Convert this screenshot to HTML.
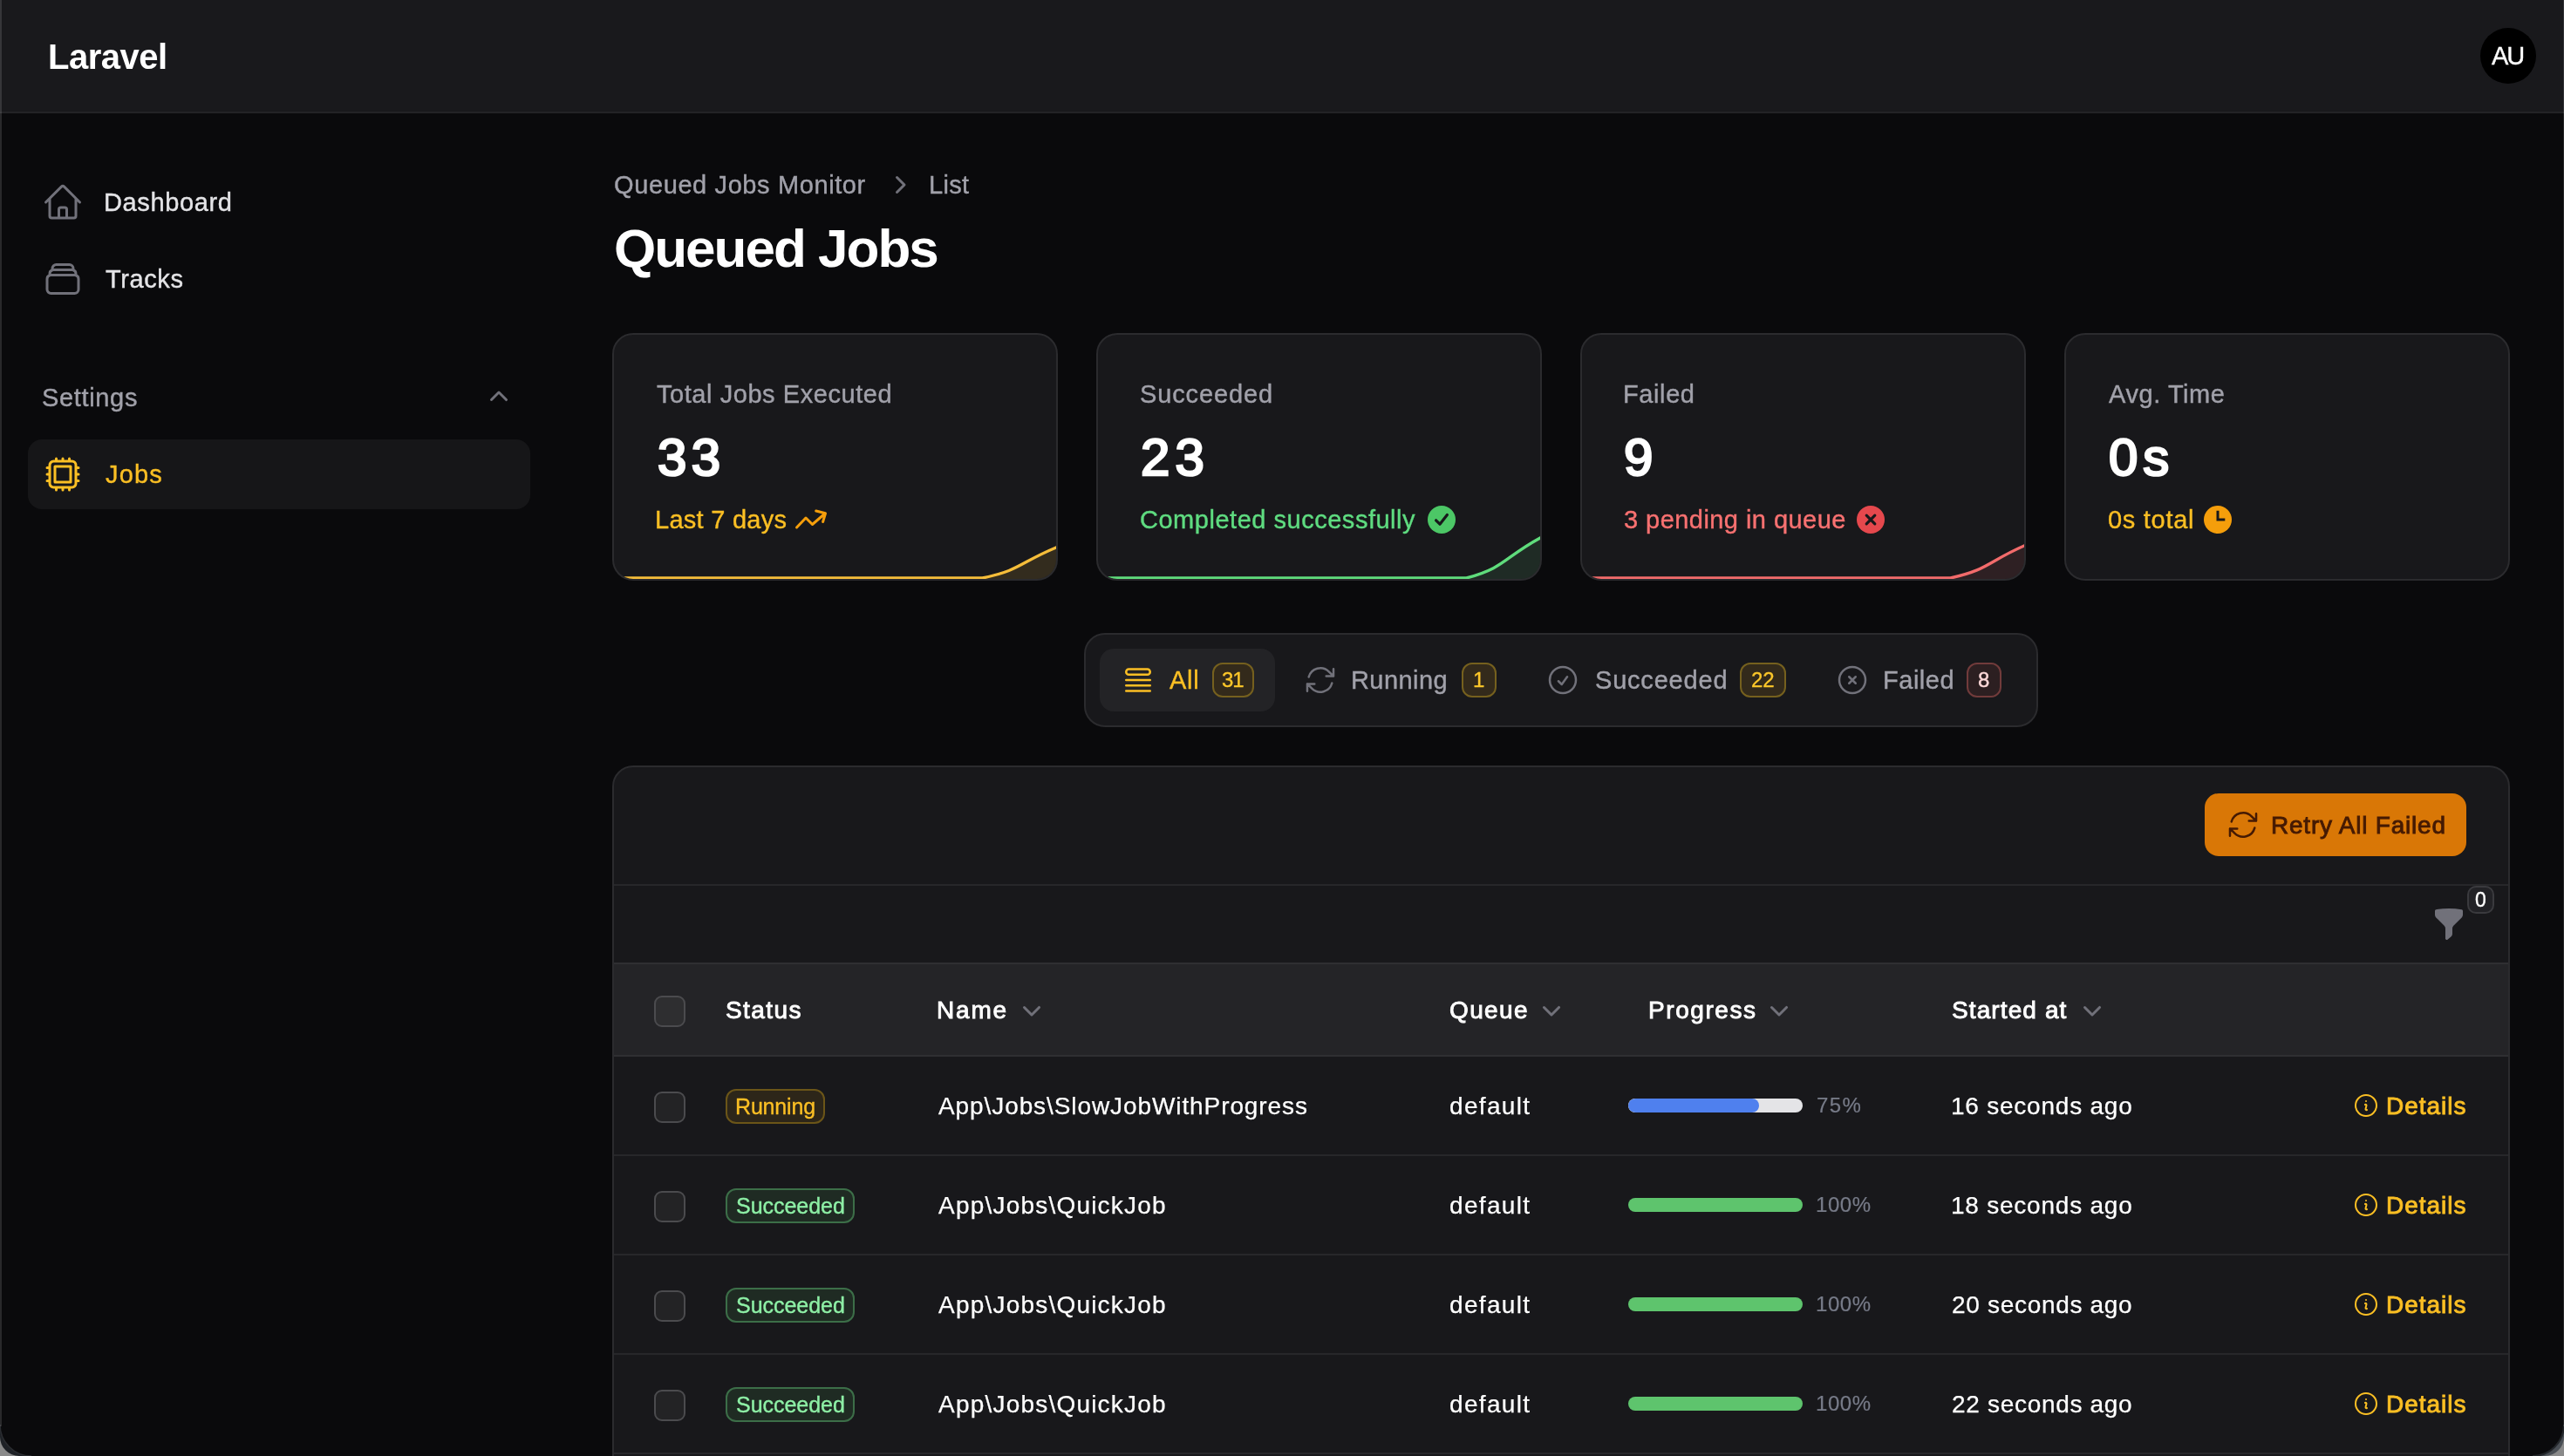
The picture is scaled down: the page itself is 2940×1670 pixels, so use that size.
<!DOCTYPE html>
<html><head><meta charset="utf-8"><title>Queued Jobs</title>
<style>
html,body{margin:0;padding:0;width:2940px;height:1670px;overflow:hidden;background:#0a0a0c;}
body{position:relative;font-family:"Liberation Sans",sans-serif;}
.t{position:absolute;white-space:nowrap;will-change:transform;}
</style></head><body>
<div style="position:absolute;left:0px;top:0px;width:2940px;height:128px;background:#19191c"></div><div style="position:absolute;left:0px;top:128px;width:2940px;height:2px;background:#232326"></div><div class="t" style="left:55.0px;top:44.6px;font-size:40px;line-height:40px;color:#ffffff;font-weight:700;letter-spacing:-0.50px;">Laravel</div><div style="position:absolute;left:2844px;top:32px;width:64px;height:64px;background:#000;border-radius:50%"></div><div class="t" style="left:2857.0px;top:49.8px;font-size:29px;line-height:29px;color:#ffffff;font-weight:400;letter-spacing:-2.00px;-webkit-text-stroke:0.35px">AU</div><svg style="position:absolute;left:48px;top:208px;" width="48" height="48" viewBox="0 0 24 24" fill="none"><path stroke="#71717a" stroke-width="1.5" stroke-linecap="round" stroke-linejoin="round" d="m2.25 12 8.954-8.955c.44-.439 1.152-.439 1.591 0L21.75 12M4.5 9.75v10.125c0 .621.504 1.125 1.125 1.125H9.75v-4.875c0-.621.504-1.125 1.125-1.125h2.25c.621 0 1.125.504 1.125 1.125V21h4.125c.621 0 1.125-.504 1.125-1.125V9.75M8.25 21h8.25"/></svg><div class="t" style="left:119.0px;top:217.8px;font-size:29px;line-height:29px;color:#e4e4e7;font-weight:400;letter-spacing:0.62px;-webkit-text-stroke:0.4px">Dashboard</div><svg style="position:absolute;left:48px;top:296px;" width="48" height="48" viewBox="0 0 24 24" fill="none"><path stroke="#71717a" stroke-width="1.5" stroke-linecap="round" stroke-linejoin="round" d="M6 6.878V6a2.25 2.25 0 0 1 2.25-2.25h7.5A2.25 2.25 0 0 1 18 6v.878m-12 0c.235-.083.487-.128.75-.128h10.5c.263 0 .515.045.75.128m-12 0A2.25 2.25 0 0 0 4.5 9v.878m13.5-3A2.25 2.25 0 0 1 19.5 9v.878m0 0a2.251 2.251 0 0 0-.75-.128H5.25c-.263 0-.515.045-.75.128m15 0A2.25 2.25 0 0 1 21 12v6a2.25 2.25 0 0 1-2.25 2.25H5.25A2.25 2.25 0 0 1 3 18v-6c0-.98.626-1.813 1.5-2.122"/></svg><div class="t" style="left:121.0px;top:305.8px;font-size:29px;line-height:29px;color:#e4e4e7;font-weight:400;letter-spacing:0.60px;-webkit-text-stroke:0.4px">Tracks</div><div class="t" style="left:48.0px;top:441.8px;font-size:29px;line-height:29px;color:#a1a1aa;font-weight:400;letter-spacing:0.66px;-webkit-text-stroke:0.4px">Settings</div><svg style="position:absolute;left:552px;top:436px;" width="40" height="40" viewBox="0 0 20 20" fill="none"><path fill="#71717a" d="M9.47 6.47a.75.75 0 0 1 1.06 0l4.25 4.25a.75.75 0 1 1-1.06 1.06L10 8.06l-3.72 3.72a.75.75 0 0 1-1.06-1.06l4.25-4.25Z"/></svg><div style="position:absolute;left:32px;top:504px;width:576px;height:80px;background:#161618;border-radius:16px"></div><svg style="position:absolute;left:48px;top:520px;" width="48" height="48" viewBox="0 0 24 24" fill="none"><path stroke="#fbbf24" stroke-width="1.5" stroke-linecap="round" stroke-linejoin="round" d="M8.25 3v1.5M4.5 8.25H3m18 0h-1.5M4.5 12H3m18 0h-1.5m-15 3.75H3m18 0h-1.5M8.25 19.5V21M12 3v1.5m0 15V21m3.75-18v1.5m0 15V21m-9-1.5h10.5a2.25 2.25 0 0 0 2.25-2.25V6.75a2.25 2.25 0 0 0-2.25-2.25H6.75A2.25 2.25 0 0 0 4.5 6.75v10.5a2.25 2.25 0 0 0 2.25 2.25Zm.75-12h9v9h-9v-9Z"/></svg><div class="t" style="left:121.0px;top:529.8px;font-size:29px;line-height:29px;color:#fbbf24;font-weight:400;letter-spacing:1.17px;-webkit-text-stroke:0.4px">Jobs</div><div class="t" style="left:704.0px;top:197.8px;font-size:29px;line-height:29px;color:#a1a1aa;font-weight:400;letter-spacing:0.61px;-webkit-text-stroke:0.4px">Queued Jobs Monitor</div><svg style="position:absolute;left:1011px;top:192px;" width="40" height="40" viewBox="0 0 20 20" fill="none"><path fill="#71717a" d="M8.22 5.22a.75.75 0 0 1 1.06 0l4.25 4.25a.75.75 0 0 1 0 1.06l-4.25 4.25a.75.75 0 0 1-1.06-1.06L11.94 10 8.22 6.28a.75.75 0 0 1 0-1.06Z"/></svg><div class="t" style="left:1065.0px;top:197.8px;font-size:29px;line-height:29px;color:#a1a1aa;font-weight:400;letter-spacing:0.33px;-webkit-text-stroke:0.4px">List</div><div class="t" style="left:704.0px;top:254.2px;font-size:62px;line-height:62px;color:#ffffff;font-weight:700;letter-spacing:-2.00px;">Queued Jobs</div><div style="position:absolute;left:702px;top:382px;width:511px;height:284px;box-sizing:border-box;background:#18181b;border:2px solid #2b2b2e;border-radius:24px;overflow:hidden"><svg style="position:absolute;left:0;top:0" width="507" height="280" viewBox="0 0 507 280"><path d="M-4,279 L422.5,279 C466.4,269.9 464.8,261.5 507,244 L511,242 L509,290 L-4,290 Z" fill="rgba(245,189,58,0.12)"/><path d="M-4,279 L422.5,279 C466.4,269.9 464.8,261.5 507,244 L511,242" stroke="#f5bd3a" stroke-width="3.4" fill="none"/></svg></div><div class="t" style="left:753.0px;top:437.8px;font-size:29px;line-height:29px;color:#a1a1aa;font-weight:400;letter-spacing:0.56px;-webkit-text-stroke:0.4px">Total Jobs Executed</div><div class="t" style="left:754.3px;top:495.4px;font-size:60px;line-height:60px;color:#ffffff;font-weight:400;letter-spacing:5.50px;-webkit-text-stroke:2.6px">33</div><div class="t" style="left:751.0px;top:581.8px;font-size:29px;line-height:29px;color:#fbbf24;font-weight:400;letter-spacing:0.27px;-webkit-text-stroke:0.4px">Last 7 days</div><div style="position:absolute;left:1257px;top:382px;width:511px;height:284px;box-sizing:border-box;background:#18181b;border:2px solid #2b2b2e;border-radius:24px;overflow:hidden"><svg style="position:absolute;left:0;top:0" width="507" height="280" viewBox="0 0 507 280"><path d="M-4,279 L422.5,279 C467.5,266.8 464.8,256.0 507,233 L511,231 L509,290 L-4,290 Z" fill="rgba(95,220,124,0.10)"/><path d="M-4,279 L422.5,279 C467.5,266.8 464.8,256.0 507,233 L511,231" stroke="#5fdc7c" stroke-width="3.4" fill="none"/></svg></div><div class="t" style="left:1307.0px;top:437.8px;font-size:29px;line-height:29px;color:#a1a1aa;font-weight:400;letter-spacing:0.88px;-webkit-text-stroke:0.4px">Succeeded</div><div class="t" style="left:1308.3px;top:495.4px;font-size:60px;line-height:60px;color:#ffffff;font-weight:400;letter-spacing:6.20px;-webkit-text-stroke:2.6px">23</div><div class="t" style="left:1307.0px;top:581.8px;font-size:29px;line-height:29px;color:#5fdc80;font-weight:400;letter-spacing:0.52px;-webkit-text-stroke:0.4px">Completed successfully</div><div style="position:absolute;left:1812px;top:382px;width:511px;height:284px;box-sizing:border-box;background:#18181b;border:2px solid #2b2b2e;border-radius:24px;overflow:hidden"><svg style="position:absolute;left:0;top:0" width="507" height="280" viewBox="0 0 507 280"><path d="M-4,279 L422.5,279 C466.6,269.3 464.8,260.5 507,242 L511,240 L509,290 L-4,290 Z" fill="rgba(242,107,107,0.10)"/><path d="M-4,279 L422.5,279 C466.6,269.3 464.8,260.5 507,242 L511,240" stroke="#f26b6b" stroke-width="3.4" fill="none"/></svg></div><div class="t" style="left:1861.0px;top:437.8px;font-size:29px;line-height:29px;color:#a1a1aa;font-weight:400;letter-spacing:0.60px;-webkit-text-stroke:0.4px">Failed</div><div class="t" style="left:1862.3px;top:495.4px;font-size:60px;line-height:60px;color:#ffffff;font-weight:400;letter-spacing:0.00px;-webkit-text-stroke:2.6px">9</div><div class="t" style="left:1862.0px;top:581.8px;font-size:29px;line-height:29px;color:#f87171;font-weight:400;letter-spacing:0.45px;-webkit-text-stroke:0.4px">3 pending in queue</div><div style="position:absolute;left:2367px;top:382px;width:511px;height:284px;box-sizing:border-box;background:#18181b;border:2px solid #2b2b2e;border-radius:24px;overflow:hidden"></div><div class="t" style="left:2418.0px;top:437.8px;font-size:29px;line-height:29px;color:#a1a1aa;font-weight:400;letter-spacing:0.57px;-webkit-text-stroke:0.4px">Avg. Time</div><div class="t" style="left:2418.3px;top:495.4px;font-size:60px;line-height:60px;color:#ffffff;font-weight:400;letter-spacing:6.00px;-webkit-text-stroke:2.6px">0s</div><div class="t" style="left:2417.0px;top:581.8px;font-size:29px;line-height:29px;color:#fbbf24;font-weight:400;letter-spacing:0.71px;-webkit-text-stroke:0.4px">0s total</div><svg style="position:absolute;left:900px;top:576px;" width="60" height="40" viewBox="0 0 60 40" fill="none"><path stroke="#f59e0b" stroke-width="3" stroke-linecap="round" stroke-linejoin="round" d="M13.5 29 24 18l7.5 7.5L46 13M35.7 10l10.8 2.7L43.6 22.5"/></svg><svg style="position:absolute;left:1633px;top:576px;" width="40" height="40" viewBox="0 0 20 20" fill="none"><circle cx="10" cy="10" r="8" fill="#4cc766"/><path d="M6.8 10.4 9 12.6 13.2 7.2" stroke="#18181b" stroke-width="1.6" stroke-linecap="round" stroke-linejoin="round"/></svg><svg style="position:absolute;left:2125px;top:576px;" width="40" height="40" viewBox="0 0 20 20" fill="none"><circle cx="10" cy="10" r="8" fill="#e5484d"/><path d="M7.6 7.6l4.8 4.8M12.4 7.6l-4.8 4.8" stroke="#18181b" stroke-width="1.6" stroke-linecap="round"/></svg><svg style="position:absolute;left:2523px;top:576px;" width="40" height="40" viewBox="0 0 20 20" fill="none"><circle cx="10" cy="10" r="8" fill="#f59e0b"/><path d="M10 5.6V10h3.4" stroke="#18181b" stroke-width="1.5" stroke-linecap="square" stroke-linejoin="miter"/></svg><div style="position:absolute;left:1243px;top:726px;width:1094px;height:108px;box-sizing:border-box;background:#18181b;border:2px solid #2b2b2e;border-radius:24px"></div><div style="position:absolute;left:1261px;top:744px;width:201px;height:72px;background:#232326;border-radius:16px"></div><svg style="position:absolute;left:1285px;top:760px;" width="40" height="40" viewBox="0 0 24 24" fill="none"><path stroke="#fbbf24" stroke-width="1.5" stroke-linecap="round" stroke-linejoin="round" d="M3.75 12h16.5m-16.5 3.75h16.5M3.75 19.5h16.5M5.625 4.5h12.75a1.875 1.875 0 0 1 0 3.75H5.625a1.875 1.875 0 0 1 0-3.75Z"/></svg><div class="t" style="left:1341.0px;top:765.8px;font-size:29px;line-height:29px;color:#fbbf24;font-weight:400;letter-spacing:0.70px;-webkit-text-stroke:0.4px">All</div><div style="position:absolute;left:1390px;top:760px;width:48px;height:40px;box-sizing:border-box;background:#332a1b;border:2px solid #75601e;border-radius:12px"></div><div class="t" style="left:1401.1px;top:768.0px;font-size:24px;line-height:24px;color:#fcc72a;font-weight:400;letter-spacing:-1.20px;-webkit-text-stroke:0.35px">31</div><svg style="position:absolute;left:1494px;top:760px;" width="40" height="40" viewBox="0 0 24 24" fill="none"><path stroke="#71717a" stroke-width="1.5" stroke-linecap="round" stroke-linejoin="round" d="M16.023 9.348h4.992v-.001M2.985 19.644v-4.992m0 0h4.992m-4.993 0 3.181 3.183a8.25 8.25 0 0 0 13.803-3.7M4.031 9.865a8.25 8.25 0 0 1 13.803-3.7l3.181 3.182m0-4.991v4.99"/></svg><div class="t" style="left:1549.0px;top:765.8px;font-size:29px;line-height:29px;color:#a1a1aa;font-weight:400;letter-spacing:0.43px;-webkit-text-stroke:0.4px">Running</div><div style="position:absolute;left:1676px;top:760px;width:40px;height:40px;box-sizing:border-box;background:#332a1b;border:2px solid #75601e;border-radius:12px"></div><div class="t" style="left:1689.0px;top:768.0px;font-size:24px;line-height:24px;color:#fcc72a;font-weight:400;letter-spacing:0.00px;-webkit-text-stroke:0.35px">1</div><svg style="position:absolute;left:1772px;top:760px;" width="40" height="40" viewBox="0 0 24 24" fill="none"><path stroke="#71717a" stroke-width="1.5" stroke-linecap="round" stroke-linejoin="round" d="M9 12.75 11.25 15 15 9.75M21 12a9 9 0 1 1-18 0 9 9 0 0 1 18 0Z"/></svg><div class="t" style="left:1828.6px;top:765.8px;font-size:29px;line-height:29px;color:#a1a1aa;font-weight:400;letter-spacing:0.80px;-webkit-text-stroke:0.4px">Succeeded</div><div style="position:absolute;left:1995px;top:760px;width:53px;height:40px;box-sizing:border-box;background:#332a1b;border:2px solid #75601e;border-radius:12px"></div><div class="t" style="left:2008.0px;top:768.0px;font-size:24px;line-height:24px;color:#fcc72a;font-weight:400;letter-spacing:0.00px;-webkit-text-stroke:0.35px">22</div><svg style="position:absolute;left:2104px;top:760px;" width="40" height="40" viewBox="0 0 24 24" fill="none"><path stroke="#71717a" stroke-width="1.5" stroke-linecap="round" stroke-linejoin="round" d="m9.75 9.75 4.5 4.5m0-4.5-4.5 4.5M21 12a9 9 0 1 1-18 0 9 9 0 0 1 18 0Z"/></svg><div class="t" style="left:2159.0px;top:765.8px;font-size:29px;line-height:29px;color:#a1a1aa;font-weight:400;letter-spacing:0.52px;-webkit-text-stroke:0.4px">Failed</div><div style="position:absolute;left:2255px;top:760px;width:40px;height:40px;box-sizing:border-box;background:#2c1f21;border:2px solid #713b3b;border-radius:12px"></div><div class="t" style="left:2268.0px;top:768.0px;font-size:24px;line-height:24px;color:#fdd9d9;font-weight:400;letter-spacing:0.00px;-webkit-text-stroke:0.35px">8</div><div style="position:absolute;left:702px;top:878px;width:2176px;height:900px;box-sizing:border-box;background:#18181b;border:2px solid #2b2b2e;border-radius:24px;overflow:hidden"></div><div style="position:absolute;left:704px;top:1014px;width:2172px;height:2px;background:#27272a"></div><div style="position:absolute;left:2528px;top:910px;width:300px;height:72px;background:#d97706;border-radius:16px"></div><svg style="position:absolute;left:2552px;top:926px;" width="40" height="40" viewBox="0 0 24 24" fill="none"><path stroke="#451a03" stroke-width="1.5" stroke-linecap="round" stroke-linejoin="round" d="M16.023 9.348h4.992v-.001M2.985 19.644v-4.992m0 0h4.992m-4.993 0 3.181 3.183a8.25 8.25 0 0 0 13.803-3.7M4.031 9.865a8.25 8.25 0 0 1 13.803-3.7l3.181 3.182m0-4.991v4.99"/></svg><div class="t" style="left:2604.0px;top:932.6px;font-size:28px;line-height:28px;color:#451a03;font-weight:400;letter-spacing:0.78px;-webkit-text-stroke:0.9px">Retry All Failed</div><svg style="position:absolute;left:2788px;top:1040px;" width="40" height="40" viewBox="0 0 20 20" fill="none"><path fill="#71717a" d="M2.628 1.601C5.028 1.206 7.49 1 10 1s4.973.206 7.372.601a.75.75 0 0 1 .628.74v2.288a2.25 2.25 0 0 1-.659 1.59l-4.682 4.683a2.25 2.25 0 0 0-.659 1.59v3.037c0 .684-.31 1.33-.844 1.757l-1.937 1.55A.75.75 0 0 1 8 18.25v-5.757a2.25 2.25 0 0 0-.659-1.591L2.659 6.22A2.25 2.25 0 0 1 2 4.629V2.34a.75.75 0 0 1 .628-.74Z"/></svg><div style="position:absolute;left:2829px;top:1016px;width:31px;height:32px;box-sizing:border-box;background:#222226;border:2px solid #3a3a3e;border-radius:10px"></div><div class="t" style="left:2838.0px;top:1020.8px;font-size:23px;line-height:23px;color:#ffffff;font-weight:400;letter-spacing:0.00px;-webkit-text-stroke:0.35px">0</div><div style="position:absolute;left:704px;top:1104px;width:2172px;height:2px;background:#2f2f32"></div><div style="position:absolute;left:704px;top:1106px;width:2172px;height:104px;background:#242427"></div><div style="position:absolute;left:704px;top:1210px;width:2172px;height:2px;background:#2f2f32"></div><div style="position:absolute;left:750px;top:1142px;width:36px;height:36px;box-sizing:border-box;background:#2e2e30;border:2px solid #4b4b4e;border-radius:9px"></div><div class="t" style="left:831.8px;top:1144.6px;font-size:28px;line-height:28px;color:#ffffff;font-weight:400;letter-spacing:1.40px;-webkit-text-stroke:0.9px">Status</div><div class="t" style="left:1074.0px;top:1144.6px;font-size:28px;line-height:28px;color:#ffffff;font-weight:400;letter-spacing:1.83px;-webkit-text-stroke:0.9px">Name</div><svg style="position:absolute;left:1163px;top:1138px;" width="40" height="40" viewBox="0 0 20 20" fill="none"><path fill="#71717a" d="M5.22 8.22a.75.75 0 0 1 1.06 0L10 11.94l3.72-3.72a.75.75 0 1 1 1.06 1.06l-4.25 4.25a.75.75 0 0 1-1.06 0L5.22 9.28a.75.75 0 0 1 0-1.06Z"/></svg><div class="t" style="left:1661.5px;top:1144.6px;font-size:28px;line-height:28px;color:#ffffff;font-weight:400;letter-spacing:1.38px;-webkit-text-stroke:0.9px">Queue</div><svg style="position:absolute;left:1759px;top:1138px;" width="40" height="40" viewBox="0 0 20 20" fill="none"><path fill="#71717a" d="M5.22 8.22a.75.75 0 0 1 1.06 0L10 11.94l3.72-3.72a.75.75 0 1 1 1.06 1.06l-4.25 4.25a.75.75 0 0 1-1.06 0L5.22 9.28a.75.75 0 0 1 0-1.06Z"/></svg><div class="t" style="left:1889.5px;top:1144.6px;font-size:28px;line-height:28px;color:#ffffff;font-weight:400;letter-spacing:1.57px;-webkit-text-stroke:0.9px">Progress</div><svg style="position:absolute;left:2020px;top:1138px;" width="40" height="40" viewBox="0 0 20 20" fill="none"><path fill="#71717a" d="M5.22 8.22a.75.75 0 0 1 1.06 0L10 11.94l3.72-3.72a.75.75 0 1 1 1.06 1.06l-4.25 4.25a.75.75 0 0 1-1.06 0L5.22 9.28a.75.75 0 0 1 0-1.06Z"/></svg><div class="t" style="left:2238.0px;top:1144.6px;font-size:28px;line-height:28px;color:#ffffff;font-weight:400;letter-spacing:1.11px;-webkit-text-stroke:0.9px">Started at</div><svg style="position:absolute;left:2379px;top:1138px;" width="40" height="40" viewBox="0 0 20 20" fill="none"><path fill="#71717a" d="M5.22 8.22a.75.75 0 0 1 1.06 0L10 11.94l3.72-3.72a.75.75 0 1 1 1.06 1.06l-4.25 4.25a.75.75 0 0 1-1.06 0L5.22 9.28a.75.75 0 0 1 0-1.06Z"/></svg><div style="position:absolute;left:750px;top:1252px;width:36px;height:36px;box-sizing:border-box;background:#232325;border:2px solid #4b4b4e;border-radius:9px"></div><div style="position:absolute;left:832px;top:1249px;width:114px;height:40px;box-sizing:border-box;background:#2d2619;border:2px solid #6b5518;border-radius:12px"></div><div class="t" style="left:842.5px;top:1257.1px;font-size:25px;line-height:25px;color:#fbbf24;font-weight:400;letter-spacing:-0.17px;-webkit-text-stroke:0.35px">Running</div><div class="t" style="left:1076.0px;top:1254.6px;font-size:28px;line-height:28px;color:#ffffff;font-weight:400;letter-spacing:0.91px;-webkit-text-stroke:0.25px">App\Jobs\SlowJobWithProgress</div><div class="t" style="left:1661.5px;top:1254.6px;font-size:28px;line-height:28px;color:#ffffff;font-weight:400;letter-spacing:1.33px;-webkit-text-stroke:0.25px">default</div><div style="position:absolute;left:1867px;top:1260px;width:200px;height:16px;border-radius:8px;background:#e4e4e7;overflow:hidden"><div style="width:150px;height:16px;border-radius:8px;background:#4f80ee"></div></div><div class="t" style="left:2082.7px;top:1256.0px;font-size:24px;line-height:24px;color:#777b88;font-weight:400;letter-spacing:1.35px;-webkit-text-stroke:0.2px">75%</div><div class="t" style="left:2237.0px;top:1254.6px;font-size:28px;line-height:28px;color:#ffffff;font-weight:400;letter-spacing:0.77px;-webkit-text-stroke:0.25px">16 seconds ago</div><svg style="position:absolute;left:2697px;top:1252px;" width="32" height="32" viewBox="0 0 24 24" fill="none"><path stroke="#fbbf24" stroke-width="1.5" stroke-linecap="round" stroke-linejoin="round" d="m11.25 11.25.041-.02a.75.75 0 0 1 1.063.852l-.708 2.836a.75.75 0 0 0 1.063.853l.041-.021M21 12a9 9 0 1 1-18 0 9 9 0 0 1 18 0Zm-9-3.75h.008v.008H12V8.25Z"/></svg><div class="t" style="left:2736.0px;top:1254.6px;font-size:28px;line-height:28px;color:#fbbf24;font-weight:400;letter-spacing:0.97px;-webkit-text-stroke:0.9px">Details</div><div style="position:absolute;left:704px;top:1324px;width:2172px;height:2px;background:#27272a"></div><div style="position:absolute;left:750px;top:1366px;width:36px;height:36px;box-sizing:border-box;background:#232325;border:2px solid #4b4b4e;border-radius:9px"></div><div style="position:absolute;left:832px;top:1363px;width:148px;height:40px;box-sizing:border-box;background:#1f2b23;border:2px solid #3c6e48;border-radius:12px"></div><div class="t" style="left:843.6px;top:1371.1px;font-size:25px;line-height:25px;color:#8ef0a6;font-weight:400;letter-spacing:-0.03px;-webkit-text-stroke:0.35px">Succeeded</div><div class="t" style="left:1076.0px;top:1368.6px;font-size:28px;line-height:28px;color:#ffffff;font-weight:400;letter-spacing:1.21px;-webkit-text-stroke:0.25px">App\Jobs\QuickJob</div><div class="t" style="left:1661.5px;top:1368.6px;font-size:28px;line-height:28px;color:#ffffff;font-weight:400;letter-spacing:1.33px;-webkit-text-stroke:0.25px">default</div><div style="position:absolute;left:1867px;top:1374px;width:200px;height:16px;border-radius:8px;background:#5ec46d"></div><div class="t" style="left:2081.7px;top:1370.0px;font-size:24px;line-height:24px;color:#777b88;font-weight:400;letter-spacing:0.57px;-webkit-text-stroke:0.2px">100%</div><div class="t" style="left:2237.0px;top:1368.6px;font-size:28px;line-height:28px;color:#ffffff;font-weight:400;letter-spacing:0.77px;-webkit-text-stroke:0.25px">18 seconds ago</div><svg style="position:absolute;left:2697px;top:1366px;" width="32" height="32" viewBox="0 0 24 24" fill="none"><path stroke="#fbbf24" stroke-width="1.5" stroke-linecap="round" stroke-linejoin="round" d="m11.25 11.25.041-.02a.75.75 0 0 1 1.063.852l-.708 2.836a.75.75 0 0 0 1.063.853l.041-.021M21 12a9 9 0 1 1-18 0 9 9 0 0 1 18 0Zm-9-3.75h.008v.008H12V8.25Z"/></svg><div class="t" style="left:2736.0px;top:1368.6px;font-size:28px;line-height:28px;color:#fbbf24;font-weight:400;letter-spacing:0.97px;-webkit-text-stroke:0.9px">Details</div><div style="position:absolute;left:704px;top:1438px;width:2172px;height:2px;background:#27272a"></div><div style="position:absolute;left:750px;top:1480px;width:36px;height:36px;box-sizing:border-box;background:#232325;border:2px solid #4b4b4e;border-radius:9px"></div><div style="position:absolute;left:832px;top:1477px;width:148px;height:40px;box-sizing:border-box;background:#1f2b23;border:2px solid #3c6e48;border-radius:12px"></div><div class="t" style="left:843.6px;top:1485.1px;font-size:25px;line-height:25px;color:#8ef0a6;font-weight:400;letter-spacing:-0.03px;-webkit-text-stroke:0.35px">Succeeded</div><div class="t" style="left:1076.0px;top:1482.6px;font-size:28px;line-height:28px;color:#ffffff;font-weight:400;letter-spacing:1.21px;-webkit-text-stroke:0.25px">App\Jobs\QuickJob</div><div class="t" style="left:1661.5px;top:1482.6px;font-size:28px;line-height:28px;color:#ffffff;font-weight:400;letter-spacing:1.33px;-webkit-text-stroke:0.25px">default</div><div style="position:absolute;left:1867px;top:1488px;width:200px;height:16px;border-radius:8px;background:#5ec46d"></div><div class="t" style="left:2081.7px;top:1484.0px;font-size:24px;line-height:24px;color:#777b88;font-weight:400;letter-spacing:0.57px;-webkit-text-stroke:0.2px">100%</div><div class="t" style="left:2238.0px;top:1482.6px;font-size:28px;line-height:28px;color:#ffffff;font-weight:400;letter-spacing:0.69px;-webkit-text-stroke:0.25px">20 seconds ago</div><svg style="position:absolute;left:2697px;top:1480px;" width="32" height="32" viewBox="0 0 24 24" fill="none"><path stroke="#fbbf24" stroke-width="1.5" stroke-linecap="round" stroke-linejoin="round" d="m11.25 11.25.041-.02a.75.75 0 0 1 1.063.852l-.708 2.836a.75.75 0 0 0 1.063.853l.041-.021M21 12a9 9 0 1 1-18 0 9 9 0 0 1 18 0Zm-9-3.75h.008v.008H12V8.25Z"/></svg><div class="t" style="left:2736.0px;top:1482.6px;font-size:28px;line-height:28px;color:#fbbf24;font-weight:400;letter-spacing:0.97px;-webkit-text-stroke:0.9px">Details</div><div style="position:absolute;left:704px;top:1552px;width:2172px;height:2px;background:#27272a"></div><div style="position:absolute;left:750px;top:1594px;width:36px;height:36px;box-sizing:border-box;background:#232325;border:2px solid #4b4b4e;border-radius:9px"></div><div style="position:absolute;left:832px;top:1591px;width:148px;height:40px;box-sizing:border-box;background:#1f2b23;border:2px solid #3c6e48;border-radius:12px"></div><div class="t" style="left:843.6px;top:1599.1px;font-size:25px;line-height:25px;color:#8ef0a6;font-weight:400;letter-spacing:-0.03px;-webkit-text-stroke:0.35px">Succeeded</div><div class="t" style="left:1076.0px;top:1596.6px;font-size:28px;line-height:28px;color:#ffffff;font-weight:400;letter-spacing:1.21px;-webkit-text-stroke:0.25px">App\Jobs\QuickJob</div><div class="t" style="left:1661.5px;top:1596.6px;font-size:28px;line-height:28px;color:#ffffff;font-weight:400;letter-spacing:1.33px;-webkit-text-stroke:0.25px">default</div><div style="position:absolute;left:1867px;top:1602px;width:200px;height:16px;border-radius:8px;background:#5ec46d"></div><div class="t" style="left:2081.7px;top:1598.0px;font-size:24px;line-height:24px;color:#777b88;font-weight:400;letter-spacing:0.57px;-webkit-text-stroke:0.2px">100%</div><div class="t" style="left:2238.0px;top:1596.6px;font-size:28px;line-height:28px;color:#ffffff;font-weight:400;letter-spacing:0.69px;-webkit-text-stroke:0.25px">22 seconds ago</div><svg style="position:absolute;left:2697px;top:1594px;" width="32" height="32" viewBox="0 0 24 24" fill="none"><path stroke="#fbbf24" stroke-width="1.5" stroke-linecap="round" stroke-linejoin="round" d="m11.25 11.25.041-.02a.75.75 0 0 1 1.063.852l-.708 2.836a.75.75 0 0 0 1.063.853l.041-.021M21 12a9 9 0 1 1-18 0 9 9 0 0 1 18 0Zm-9-3.75h.008v.008H12V8.25Z"/></svg><div class="t" style="left:2736.0px;top:1596.6px;font-size:28px;line-height:28px;color:#fbbf24;font-weight:400;letter-spacing:0.97px;-webkit-text-stroke:0.9px">Details</div><div style="position:absolute;left:704px;top:1666px;width:2172px;height:2px;background:#27272a"></div><svg style="position:absolute;left:0;top:1630px" width="40" height="40" viewBox="0 0 40 40"><path d="M0,4 A36,36 0 0 0 36,40 L0,40 Z" fill="#1e2126"/><path d="M0,18 A22,22 0 0 0 22,40 L0,40 Z" fill="#8a8a8a"/><path d="M0,4 A36,36 0 0 0 36,40" stroke="#2a2c30" stroke-width="1.5" fill="none"/></svg><svg style="position:absolute;left:2900px;top:1630px" width="40" height="40" viewBox="0 0 40 40"><path d="M40,4 A36,36 0 0 1 4,40 L40,40 Z" fill="#4a4f55"/><path d="M40,18 A22,22 0 0 1 18,40 L40,40 Z" fill="#8a8a8a"/><path d="M40,4 A36,36 0 0 1 4,40" stroke="#23262a" stroke-width="2" fill="none"/></svg><div style="position:absolute;left:0px;top:0px;width:2px;height:1636px;background:rgba(255,255,255,0.13)"></div><div style="position:absolute;left:2939px;top:0px;width:1px;height:1636px;background:rgba(255,255,255,0.12)"></div>
</body></html>
